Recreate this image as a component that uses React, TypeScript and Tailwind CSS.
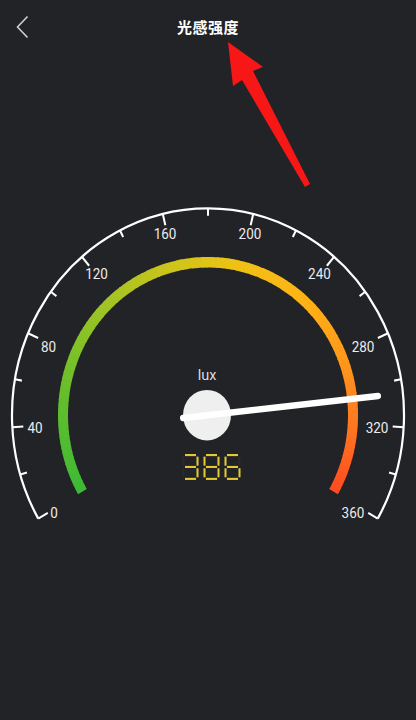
import React from "react";

// gauge geometry (viewBox units; the picture is stretched a bit vertically)
const CX = 208;
const CY = 204;
const VB_H = 312.8;
const SY = 330 / VB_H;

const pt = (r: number, deg: number): [number, number] => {
  const a = (deg * Math.PI) / 180;
  return [CX + r * Math.cos(a), CY - r * Math.sin(a)];
};

const arc = (r: number, a0: number, a1: number) => {
  const [x0, y0] = pt(r, a0);
  const [x1, y1] = pt(r, a1);
  const large = a0 - a1 > 180 ? 1 : 0;
  return `M${x0} ${y0} A${r} ${r} 0 ${large} 1 ${x1} ${y1}`;
};

const valueToAngle = (v: number) => 210 - (v * 240) / 360;

const stops: [number, string][] = [
  [0, "#3cba36"],
  [0.15, "#62bd2d"],
  [0.3, "#9ac425"],
  [0.45, "#d0c41b"],
  [0.55, "#efc215"],
  [0.68, "#ffb215"],
  [0.8, "#ff951c"],
  [0.9, "#ff7422"],
  [1, "#ff4b1f"],
];

const hex = (c: string) => [1, 3, 5].map((i) => parseInt(c.slice(i, i + 2), 16));

const colorAt = (t: number) => {
  for (let i = 0; i < stops.length - 1; i++) {
    const [t0, c0] = stops[i];
    const [t1, c1] = stops[i + 1];
    if (t >= t0 && t <= t1) {
      const k = (t - t0) / (t1 - t0);
      const a = hex(c0);
      const b = hex(c1);
      const m = a.map((v, j) => Math.round(v + (b[j] - v) * k));
      return `rgb(${m[0]},${m[1]},${m[2]})`;
    }
  }
  return stops[stops.length - 1][1];
};

// label centres measured on the screen (page px)
const labels: { v: string; x: number; y: number }[] = [
  { v: "0", x: 54, y: 513 },
  { v: "40", x: 35, y: 428 },
  { v: "80", x: 48.5, y: 346.5 },
  { v: "120", x: 96.5, y: 274 },
  { v: "160", x: 165, y: 234 },
  { v: "200", x: 250, y: 234 },
  { v: "240", x: 319.5, y: 274 },
  { v: "280", x: 363, y: 346.5 },
  { v: "320", x: 377, y: 428 },
  { v: "360", x: 353, y: 513 },
];

const SEGS: Record<string, string> = {
  "3": "abcdg",
  "8": "abcdefg",
  "6": "acdefg",
};

const Digit = ({ d, x, y }: { d: string; x: number; y: number }) => {
  const w = 16;
  const h = 24.6;
  const m = h / 2;
  const lines: Record<string, [number, number, number, number]> = {
    a: [x + 2.5, y + 1, x + w - 2.5, y + 1],
    b: [x + w - 1, y + 2.5, x + w - 1, y + m - 1.2],
    c: [x + w - 1, y + m + 1.2, x + w - 1, y + h - 2.5],
    d: [x + 2.5, y + h - 1, x + w - 2.5, y + h - 1],
    e: [x + 1, y + m + 1.2, x + 1, y + h - 2.5],
    f: [x + 1, y + 2.5, x + 1, y + m - 1.2],
    g: [x + 2.5, y + m, x + w - 2.5, y + m],
  };
  return (
    <g strokeWidth={2} strokeLinecap="butt">
      {Object.entries(lines).map(([k, l]) => (
        <line key={"g" + k} x1={l[0]} y1={l[1]} x2={l[2]} y2={l[3]} stroke="#2a2b2d" />
      ))}
      {SEGS[d].split("").map((k) => {
        const l = lines[k];
        return <line key={k} x1={l[0]} y1={l[1]} x2={l[2]} y2={l[3]} stroke="#e2c935" />;
      })}
    </g>
  );
};

const Gauge = () => {
  const N = 120;
  const span = 240;
  const segs = Array.from({ length: N }, (_, i) => {
    const a0 = 210 - (span * i) / N + (i === 0 ? 0 : 0.4);
    const a1 = 210 - (span * (i + 1)) / N;
    return { d: arc(145, a0, a1), c: colorAt((i + 0.5) / N) };
  });

  const ticks = Array.from({ length: 19 }, (_, i) => {
    const v = i * 20;
    const major = v % 40 === 0;
    const a = valueToAngle(v);
    const [x0, y0] = pt(196, a);
    const [x1, y1] = pt(major ? 185 : 189, a);
    return { x0, y0, x1, y1, k: v };
  });

  const digitY = (454 - 200) / SY;

  return (
    <svg
      className="block mt-[146px] w-[416px] h-[330px]"
      viewBox={`0 0 416 ${VB_H}`}
      preserveAspectRatio="none"
    >
      <path d={arc(196, 210, -30)} fill="none" stroke="#ffffff" strokeWidth={2.2} />
      {ticks.map((t) => (
        <line key={t.k} x1={t.x0} y1={t.y0} x2={t.x1} y2={t.y1} stroke="#ffffff" strokeWidth={2} />
      ))}
      {segs.map((s, i) => (
        <path key={i} d={s.d} fill="none" stroke={s.c} strokeWidth={10} />
      ))}
      {labels.map((l) => (
        <text
          key={l.v}
          x={l.x}
          y={(l.y - 200) / SY}
          fill="#ececec"
          fontSize={13.5}
          fontFamily="Roboto, sans-serif"
          textAnchor="middle"
          dominantBaseline="central"
        >
          {l.v}
        </text>
      ))}
      <text
        x={207}
        y={(375 - 200) / SY}
        fill="#dcdcdc"
        fontSize={14.5}
        fontFamily="Roboto, sans-serif"
        textAnchor="middle"
        dominantBaseline="central"
      >
        lux
      </text>
      <circle cx={207} cy={CY} r={24} fill="#efefef" />
      <line
        x1={183}
        y1={(418 - 200) / SY}
        x2={378}
        y2={(396 - 200) / SY}
        stroke="#ffffff"
        strokeWidth={6}
        strokeLinecap="round"
      />
      <Digit d="3" x={182.5} y={digitY} />
      <Digit d="8" x={203.5} y={digitY} />
      <Digit d="6" x={224.5} y={digitY} />
    </svg>
  );
};

export default function App() {
  return (
    <div className="relative w-[416px] h-[720px] bg-[#222327] overflow-hidden">
      {/* Barra superior */}
      <header className="grid grid-cols-[1fr_auto_1fr] items-center h-[54px] px-4">
        <svg width="14" height="24" viewBox="0 0 14 24" className="justify-self-start">
          <path d="M11.5 1.5 L1.5 12 L11.5 22.5" fill="none" stroke="#cfcfcf" strokeWidth={1.6} />
        </svg>
        <h1 className="text-white text-[15px] font-bold tracking-[0.5px] font-['Noto_Sans_CJK_SC',sans-serif]">
          光感强度
        </h1>
        <div />
      </header>

      <Gauge />

      {/* Flecha roja de anotación */}
      <svg className="absolute left-0 top-0 pointer-events-none" width="416" height="200">
        <polygon
          points="228,42 263,67 253,71 310,184 305,187 242,80 233,86"
          fill="#f81717"
        />
      </svg>
    </div>
  );
}
